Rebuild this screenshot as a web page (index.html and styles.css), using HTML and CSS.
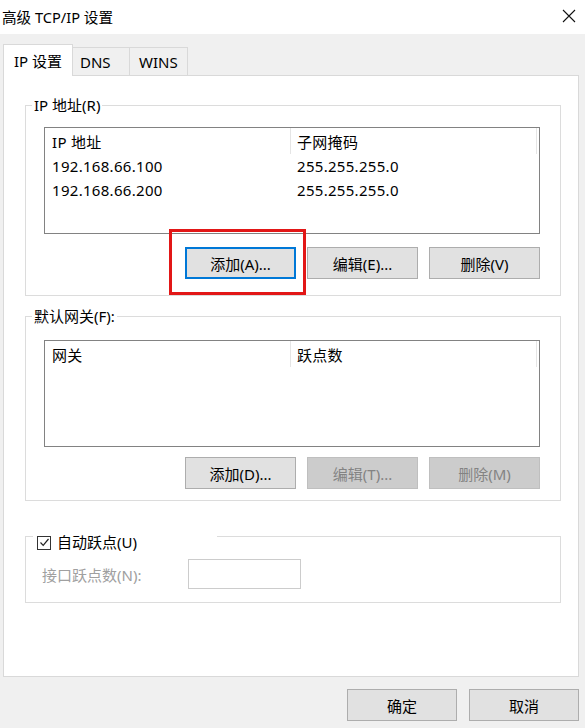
FILE: index.html
```html
<!DOCTYPE html>
<html lang="zh-CN">

<head>
    <meta charset="UTF-8">
    <meta name="viewport" content="width=device-width, initial-scale=1.0">
    <title>高级 TCP/IP 设置</title>
    <link rel="stylesheet" href="styles.css">
</head>

<body>
    <div class="dialog">
        <div class="titlebar">
            <span class="title">高级 TCP/IP 设置</span>
            <svg class="close" width="14" height="14" viewBox="0 0 14 14">
                <path d="M1 1 L13 13 M13 1 L1 13" stroke="#111" stroke-width="1.1" fill="none" />
            </svg>
        </div>

        <div class="body">
            <div class="tabs">
                <div class="tab active">IP 设置</div>
                <div class="tab">DNS</div>
                <div class="tab">WINS</div>
            </div>

            <div class="panel">
                <!-- IP addresses -->
                <fieldset class="group group-ip">
                    <legend>IP 地址(R)</legend>
                    <div class="group-body">
                        <div class="list">
                            <div class="list-head">
                                <div class="col col-1">IP 地址</div>
                                <div class="col col-2">子网掩码</div>
                            </div>
                            <div class="list-row">
                                <div class="col col-1">192.168.66.100</div>
                                <div class="col col-2">255.255.255.0</div>
                            </div>
                            <div class="list-row">
                                <div class="col col-1">192.168.66.200</div>
                                <div class="col col-2">255.255.255.0</div>
                            </div>
                        </div>
                        <div class="buttons">
                            <span class="marked">
                                <button class="btn focused">添加(A)...</button>
                            </span>
                            <button class="btn">编辑(E)...</button>
                            <button class="btn">删除(V)</button>
                        </div>
                    </div>
                </fieldset>

                <!-- default gateways -->
                <fieldset class="group group-gw">
                    <legend>默认网关(F):</legend>
                    <div class="group-body">
                        <div class="list">
                            <div class="list-head">
                                <div class="col col-1">网关</div>
                                <div class="col col-2">跃点数</div>
                            </div>
                        </div>
                        <div class="buttons">
                            <button class="btn">添加(D)...</button>
                            <button class="btn" disabled>编辑(T)...</button>
                            <button class="btn" disabled>删除(M)</button>
                        </div>
                    </div>
                </fieldset>

                <!-- metric -->
                <fieldset class="group group-metric">
                    <legend>
                        <label class="check">
                            <span class="box">
                                <svg width="11" height="11" viewBox="0 0 11 11">
                                    <path d="M1.5 5.5 L4.2 8.3 L9.5 2" stroke="#222" stroke-width="1.2" fill="none" />
                                </svg>
                            </span>
                            自动跃点(U)
                        </label>
                    </legend>
                    <div class="group-body metric-row">
                        <span class="metric-label">接口跃点数(N):</span>
                        <span class="metric-input"></span>
                    </div>
                </fieldset>
            </div>

            <div class="footer">
                <button class="btn">确定</button>
                <button class="btn">取消</button>
            </div>
        </div>
    </div>
</body>

</html>
```

FILE: styles.css
```css
* {
    box-sizing: border-box;
}

body {
    margin: 0;
    font-family: "Noto Sans", "Noto Sans CJK SC", sans-serif;
    font-size: 15px;
    color: #000;
    background: #f0f0f0;
}

.dialog {
    width: 585px;
    height: 728px;
    background: #f0f0f0;
}

.titlebar {
    height: 34px;
    background: #fff;
    display: flex;
    align-items: center;
    justify-content: space-between;
    padding: 0 9px 2px 2px;
}

.title {
    font-size: 14.6px;
}

.close {
    display: block;
}

.body {
    padding: 9px 6px 0 3px;
}

/* tab strip */
.tabs {
    display: flex;
    align-items: flex-end;
    height: 32px;
}

.tab {
    height: 28px;
    line-height: 28px;
    white-space: nowrap;
    border: 1px solid #d9d9d9;
    border-bottom: none;
    border-left: none;
    background: #f0f0f0;
}

.tab:nth-child(2) {
    width: 57px;
    padding-left: 7px;
}

.tab:nth-child(3) {
    width: 58px;
    padding-left: 9px;
}

.tab.active {
    height: 32px;
    width: 70px;
    padding-left: 10px;
    line-height: 33px;
    background: #fff;
    border-left: 1px solid #d9d9d9;
    margin-bottom: -1px;
    position: relative;
}

.panel {
    height: 602px;
    background: #fff;
    border: 1px solid #d9d9d9;
    padding: 0 17px 0 21px;
}

/* group boxes */
.group {
    margin: 0;
    padding: 0;
    border: 1px solid #dcdcdc;
    min-width: 0;
}

.group legend {
    margin-left: 6px;
    padding: 0 2px;
    height: 21px;
    line-height: 21px;
}

.group-body {
    padding: 0 20px 0 18px;
}

.group-ip {
    margin-top: 19px;
}

.group-ip .group-body {
    padding-bottom: 16px;
}

.group-gw {
    margin-top: 10px;
}

.group-gw .group-body {
    padding-bottom: 11px;
}

.group-metric {
    margin-top: 19px;
}

/* list views */
.list {
    height: 107px;
    border: 1px solid #828282;
    background: #fff;
    letter-spacing: 0.3px;
}

.group-ip .list {
    margin-top: 11px;
}

.group-gw .list {
    margin-top: 13px;
}

.list-head,
.list-row {
    display: flex;
}

.list-head {
    height: 26px;
    line-height: 28px;
}

.list-row {
    height: 24px;
    line-height: 24px;
}

.col-1 {
    width: 246px;
    padding-left: 7px;
}

.col-2 {
    flex: 1;
    padding-left: 6px;
}

.list-head .col {
    border-right: 1px solid #e5e5e5;
}

.list-head .col-2 {
    margin-right: 2px;
}

/* buttons */
.buttons {
    display: flex;
    justify-content: flex-end;
    gap: 11px;
    margin-top: 13px;
}

.group-gw .buttons {
    margin-top: 10px;
}

.btn {
    width: 111px;
    height: 32px;
    padding: 0;
    font-family: inherit;
    font-size: 15px;
    color: #000;
    background: #e1e1e1;
    border: 1px solid #adadad;
    border-radius: 0;
}

.btn.focused {
    border: 2px solid #0078d7;
}

.btn:disabled {
    color: #838383;
    background: #cccccc;
    border-color: #bfbfbf;
}

.marked {
    position: relative;
    display: block;
}

.marked .btn {
    display: block;
}

.marked::after {
    content: "";
    position: absolute;
    top: -18px;
    left: -16px;
    right: -10px;
    bottom: -16px;
    border: 3px solid #e21717;
}

/* automatic metric: the checkbox sits below the frame line */
.group-metric legend {
    width: 184px;
    height: 33px;
    margin-left: 7px;
    padding: 12px 0 0 4px;
}

.check {
    display: flex;
    align-items: center;
    gap: 6px;
}

.box {
    width: 14px;
    height: 14px;
    border: 1px solid #333;
    display: flex;
    align-items: center;
    justify-content: center;
}

.box svg {
    display: block;
}

.metric-row {
    display: flex;
    align-items: center;
    margin-top: 6px;
    padding-left: 16px;
    padding-bottom: 13px;
}

.metric-label {
    width: 146px;
    color: #a0a0a0;
}

.metric-input {
    width: 113px;
    height: 30px;
    border: 1px solid #cccccc;
    background: #fff;
}

.footer {
    display: flex;
    justify-content: flex-end;
    gap: 12px;
    margin-top: 12px;
}

.footer .btn {
    width: 110px;
}
```
